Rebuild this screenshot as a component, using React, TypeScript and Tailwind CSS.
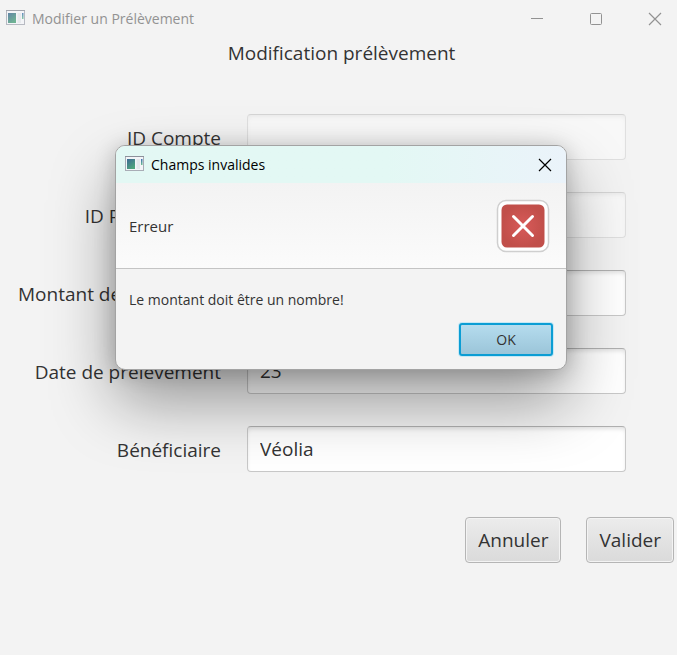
import React from "react";

function AppIcon({ faded = false }: { faded?: boolean }) {
  return (
    <svg
      width="20"
      height="17"
      viewBox="0 0 20 17"
      aria-hidden="true"
      className={faded ? "shrink-0 opacity-80" : "shrink-0"}
    >
      <defs>
        <linearGradient id="screen" x1="0" y1="0" x2="0.6" y2="1">
          <stop offset="0" stopColor="#3d6a94" />
          <stop offset="1" stopColor="#4fa47c" />
        </linearGradient>
        <linearGradient id="strip" x1="0" y1="0" x2="0" y2="1">
          <stop offset="0" stopColor="#3f6fb5" />
          <stop offset="1" stopColor="#6cc08f" />
        </linearGradient>
      </defs>
      <rect x="0.5" y="0.5" width="18" height="14" fill="#f3f5f8" stroke="#a9adb6" />
      <path d="M0 0.5h19" stroke="#8d919b" />
      <rect x="2" y="3" width="8" height="10" fill="url(#screen)" />
      <rect x="11.5" y="3" width="3.5" height="10" fill="#e4e7eb" />
      <rect x="16" y="3" width="1.5" height="6" fill="url(#strip)" />
    </svg>
  );
}

function CloseGlyph() {
  return (
    <svg width="14" height="14" viewBox="0 0 14 14" fill="none" stroke="currentColor" strokeWidth="1.2" aria-hidden="true">
      <path d="M1 1l12 12M13 1L1 13" />
    </svg>
  );
}

function ErrorIcon() {
  return (
    <svg width="54" height="54" viewBox="0 0 54 54" role="img" aria-label="Erreur">
      <defs>
        <radialGradient id="red">
          <stop offset="0" stopColor="#d85a59" />
          <stop offset="1" stopColor="#c14f4a" />
        </radialGradient>
      </defs>
      <rect x="1.5" y="1.5" width="51" height="51" rx="8.5" fill="#fff" stroke="#cfcfcf" strokeWidth="1.5" />
      <rect x="5.5" y="5.5" width="43" height="43" rx="5.5" fill="url(#red)" />
      <path d="M17.5 17.5l19 19M36.5 17.5l-19 19" stroke="#fff" strokeWidth="3" strokeLinecap="round" />
    </svg>
  );
}

type FieldProps = { id: string; label: string; value?: string; disabled?: boolean };

function Field({ id, label, value = "", disabled = false }: FieldProps) {
  return (
    <>
      <label htmlFor={id} className="truncate pt-0.5 text-right">
        {label}
      </label>
      <input
        id={id}
        type="text"
        defaultValue={value}
        disabled={disabled}
        className="h-[46px] w-full min-w-0 rounded border border-[#c8c8c8] border-t-[#b0b0b0] bg-white px-3 shadow-[inset_0_3px_4px_-1px_#e2e2e2] outline-none disabled:opacity-45"
      />
    </>
  );
}

const formButton =
  "h-[46px] rounded border border-[#b5b5b5] bg-linear-to-b from-[#ececec] to-[#dadada] px-3 shadow-[inset_0_0_0_1px_#f3f3f3]";

export default function App() {
  return (
    <div className="relative min-h-screen bg-[#f3f3f3] font-['Open_Sans','Noto_Sans',sans-serif] text-[19px] leading-6 text-[#333]">
      <header className="flex h-9 items-center gap-1.5 pt-px pl-1.5 text-sm text-[#929292]">
        <AppIcon faded />
        <span className="flex-1">Modifier un Prélèvement</span>
        <div className="flex gap-[45px] pr-[15px]">
          <button type="button" aria-label="Réduire">
            <svg width="14" height="14" viewBox="0 0 14 14" aria-hidden="true">
              <path d="M1 6.5h12" stroke="currentColor" />
            </svg>
          </button>
          <button type="button" aria-label="Agrandir">
            <svg width="14" height="14" viewBox="0 0 14 14" aria-hidden="true">
              <rect x="1.5" y="1.5" width="11" height="11" rx="1" fill="none" stroke="currentColor" />
            </svg>
          </button>
          <button type="button" aria-label="Fermer">
            <CloseGlyph />
          </button>
        </div>
      </header>

      <main>
        <h1 className="pt-[5px] pl-1.5 text-center">Modification prélèvement</h1>
        <form>
          <div className="grid grid-cols-[203px_minmax(0,1fr)] items-center gap-x-[26px] gap-y-8 pt-[49px] pr-[51px] pl-[18px]">
            <Field id="compte" label="ID Compte" disabled />
            <Field id="prelevement" label="ID Prélèvement" disabled />
            <Field id="montant" label="Montant de prélèvement" />
            <Field id="date" label="Date de prélèvement" value="23" />
            <Field id="beneficiaire" label="Bénéficiaire" value="Véolia" />
          </div>
          <div className="flex justify-end gap-[25px] pt-[45px] pr-[3px]">
            <button type="button" className={formButton}>
              Annuler
            </button>
            <button type="button" className={formButton}>
              Valider
            </button>
          </div>
        </form>
      </main>

      <div className="absolute inset-x-0 top-[145px] flex justify-center pl-[5px]">
        <section
          role="alertdialog"
          aria-labelledby="alert-title"
          aria-describedby="alert-text"
          className="w-full max-w-[452px] overflow-hidden rounded-[10px] border border-[#a3a3a3] bg-[#f3f3f3] text-sm shadow-[0_32px_64px_rgba(0,0,0,0.38),0_2px_21px_rgba(0,0,0,0.2)]"
        >
          <div className="flex h-[37px] items-center gap-1.5 bg-linear-to-r from-[#e3f8f4] from-60% to-[#ebf3fa] pr-3.5 pl-[9px] text-black">
            <AppIcon />
            <h2 id="alert-title" className="flex-1">
              Champs invalides
            </h2>
            <button type="button" aria-label="Fermer">
              <CloseGlyph />
            </button>
          </div>
          <div className="flex h-[86px] items-center justify-between border-b border-[#c4c4c4] bg-linear-to-b from-[#f3f3f3] to-[#fbfbfb] pr-4 pl-[13px]">
            <p className="pt-0.5 text-[15px]">Erreur</p>
            <ErrorIcon />
          </div>
          <p id="alert-text" className="px-[13px] pt-[21px]">
            Le montant doit être un nombre!
          </p>
          <div className="flex justify-end py-[13px] pr-[13px]">
            <button
              type="button"
              className="h-[33px] w-[94px] rounded-[3px] border-2 border-[#0b9dd4] bg-linear-to-b from-[#b5dcee] to-[#9bc5d9] shadow-[0_0_0_1px_#c5e8f5]"
            >
              OK
            </button>
          </div>
        </section>
      </div>
    </div>
  );
}
